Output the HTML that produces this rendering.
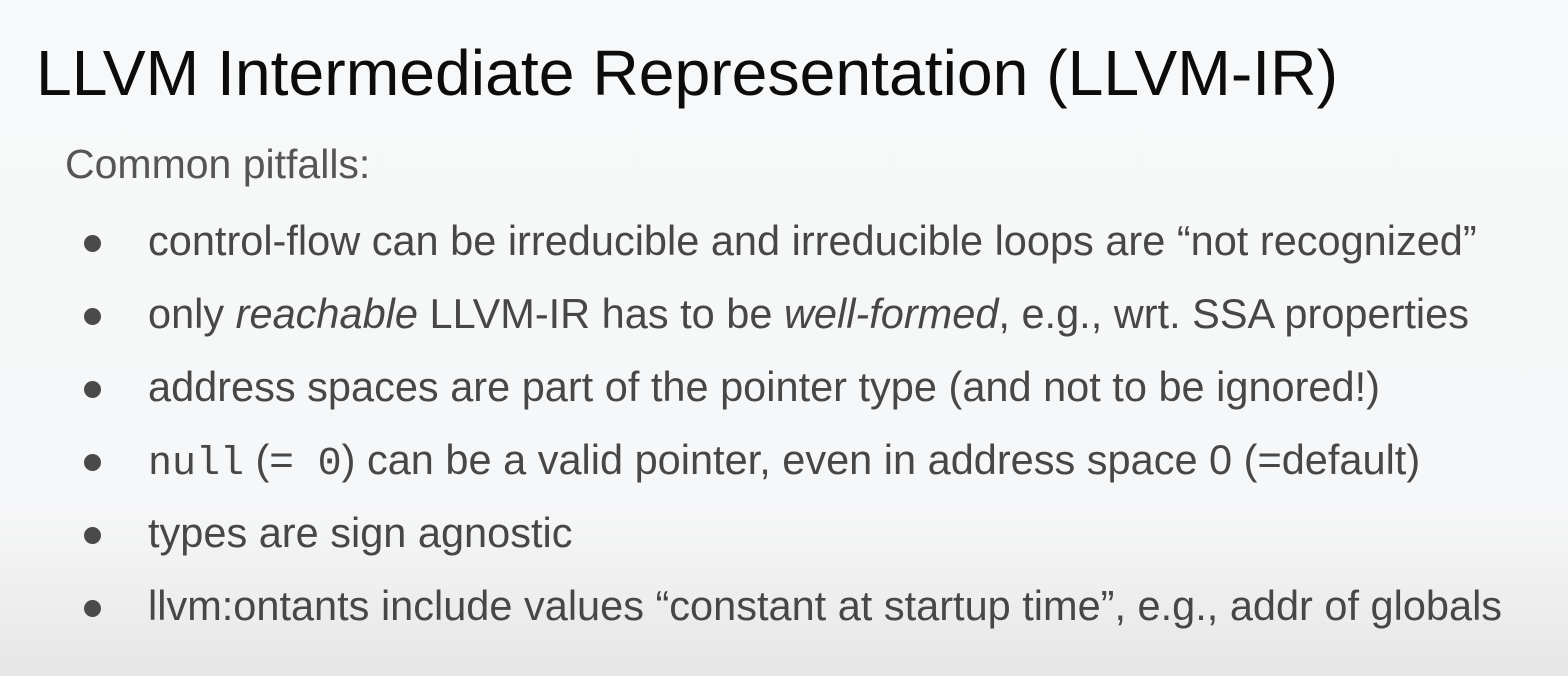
<!DOCTYPE html>
<html><head><style>
html,body{margin:0;padding:0}
body{width:1568px;height:676px;overflow:hidden;position:relative;
background:linear-gradient(to bottom,#f7f8f9 0%,#f6f7f8 75%,#e6e6e6 100%);
font-family:"Liberation Sans",sans-serif;}
.t{position:absolute;left:36px;top:36px;font-size:64.3px;color:#0c0c0c;white-space:nowrap}
.s{position:absolute;left:65px;top:141px;font-size:41px;color:#555;white-space:nowrap}
.b{position:absolute;left:148px;font-size:41.5px;color:#474747;white-space:pre;line-height:48px}
.d{position:absolute;left:84px;width:17px;height:17px;border-radius:50%;background:#4a4a4a}
.m{font-family:"Liberation Mono",monospace;font-size:40px}
</style></head><body>
<div class="t">LLVM Intermediate Representation (LLVM-IR)</div>
<div class="s">Common pitfalls:</div>
<div class="d" style="top:235px"></div>
<div class="b" style="top:217px">control-flow can be irreducible and irreducible loops are “not recognized”</div>
<div class="d" style="top:308px"></div>
<div class="b" style="top:290px">only <i>reachable</i> LLVM-IR has to be <i>well-formed</i>, e.g., wrt. SSA properties</div>
<div class="d" style="top:381px"></div>
<div class="b" style="top:363px">address spaces are part of the pointer type (and not to be ignored!)</div>
<div class="d" style="top:454px"></div>
<div class="b" style="top:436px"><span class="m">null</span> (=<span class="m"> 0</span>) can be a valid pointer, even in address space 0 (=default)</div>
<div class="d" style="top:527px"></div>
<div class="b" style="top:509px">types are sign agnostic</div>
<div class="d" style="top:600px"></div>
<div class="b" style="top:582px">llvm:ontants include values “constant at startup time”, e.g., addr of globals</div>
</body></html>
